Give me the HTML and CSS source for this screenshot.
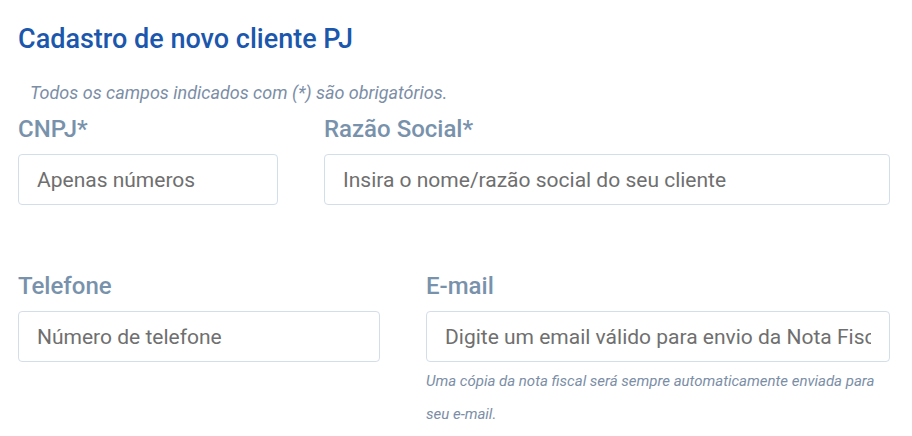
FILE: index.html
```html
<!DOCTYPE html>
<html lang="pt-BR">
<head>
<meta charset="utf-8">
<title>Cadastro de novo cliente PJ</title>
<link rel="stylesheet" href="styles.css">
</head>
<body>
<main class="page">
  <h1 class="title">Cadastro de novo cliente PJ</h1>
  <p class="note">Todos os campos indicados com (*) são obrigatórios.</p>
  <div class="row row-1">
    <div class="field f-cnpj">
      <label class="label">CNPJ*</label>
      <input class="input" type="text" placeholder="Apenas números">
    </div>
    <div class="field f-razao">
      <label class="label">Razão Social*</label>
      <input class="input" type="text" placeholder="Insira o nome/razão social do seu cliente">
    </div>
  </div>
  <div class="row row-2">
    <div class="field f-tel">
      <label class="label">Telefone</label>
      <input class="input" type="text" placeholder="Número de telefone">
    </div>
    <div class="field f-email">
      <label class="label">E-mail</label>
      <input class="input" type="text" placeholder="Digite um email válido para envio da Nota Fiscal">
      <p class="help">Uma cópia da nota fiscal será sempre automaticamente enviada para seu e-mail.</p>
    </div>
  </div>
</main>
</body>
</html>
```
FILE: styles.css
```css
* { box-sizing: border-box; }
html, body { margin: 0; padding: 0; background: #fff; }
body { font-family: Roboto, "Liberation Sans", sans-serif; }
.page { padding: 22px 22px 0 18px; }
.title {
  margin: 0;
  font-size: 27px;
  font-weight: 500;
  color: #1b57ad;
  line-height: 34px;
}
.note {
  margin: 26px 0 0 12px;
  font-size: 18px;
  font-style: italic;
  color: #7b8ea6;
  line-height: 22px;
}
.row { display: flex; gap: 46px; }
.row-1 { margin-top: 10px; }
.row-2 { margin-top: 66px; }
.f-cnpj { width: 260px; }
.f-razao { flex: 1; }
.f-tel { width: 362px; }
.f-email { flex: 1; }
.field { display: flex; flex-direction: column; }
.label {
  font-size: 24px;
  font-weight: 500;
  color: #7992ac;
  line-height: 30px;
  margin-bottom: 10px;
}
.input {
  height: 51px;
  border: 1px solid #d3deeb;
  border-radius: 4px;
  padding: 0 18px;
  font-family: Roboto, "Liberation Sans", sans-serif;
  font-size: 21px;
  color: #555;
  background: #fff;
  outline: none;
  width: 100%;
}
.input::placeholder { color: #6f6f6f; opacity: 1; }
.help {
  margin: 3px 0 0;
  font-size: 15px;
  font-style: italic;
  color: #7b8ea6;
  line-height: 33px;
}
```
